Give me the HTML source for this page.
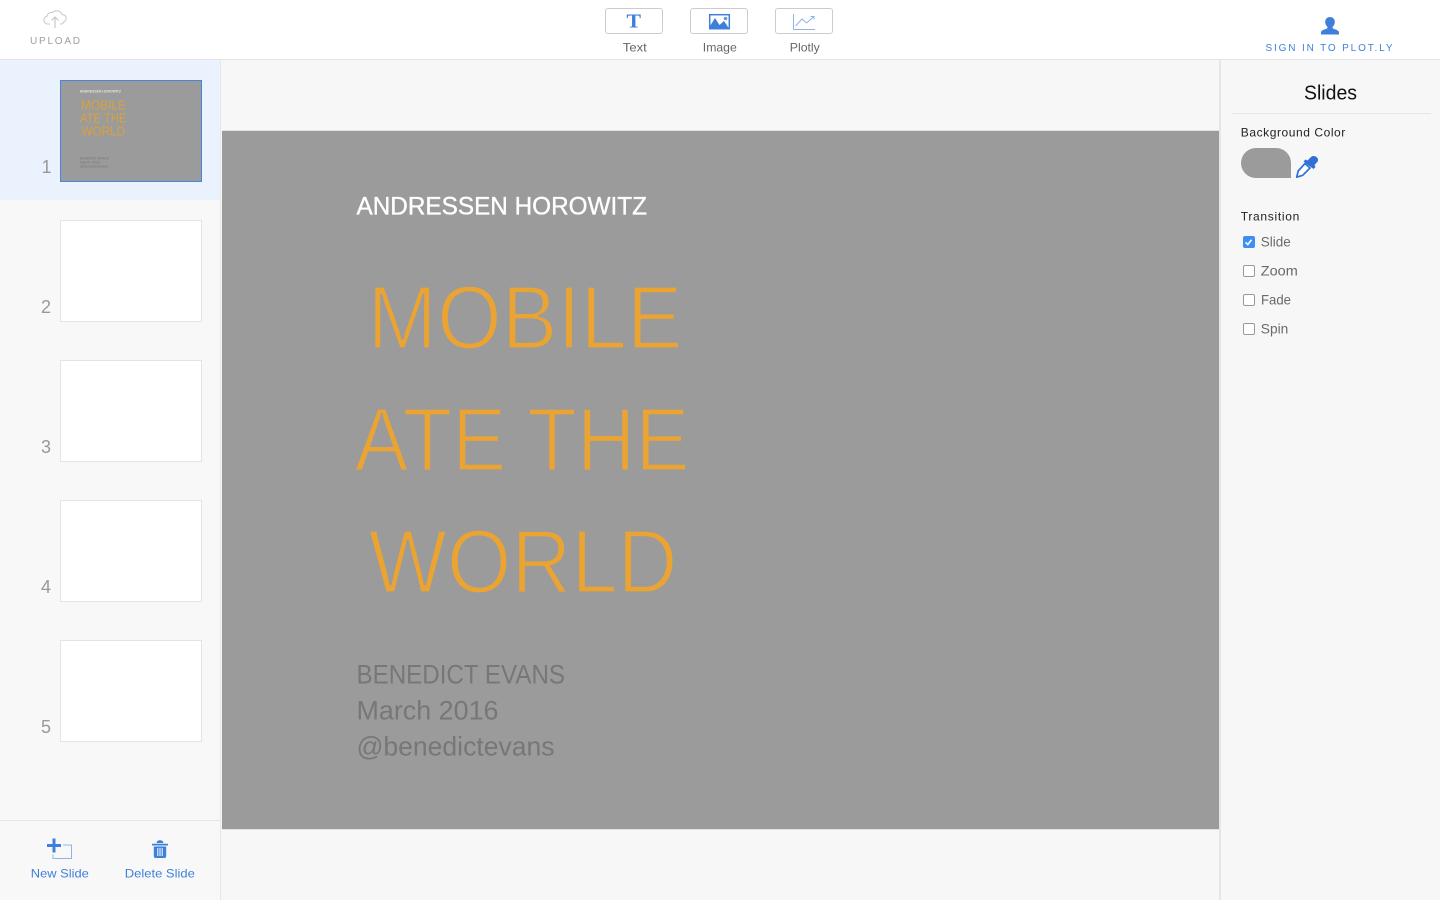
<!DOCTYPE html>
<html lang="en">
<head>
<meta charset="utf-8">
<title>Slides</title>
<style>
html,body{margin:0;padding:0;width:1440px;height:900px;overflow:hidden;background:#f7f7f7}
body{position:relative;font-family:"Liberation Sans",sans-serif}
div{position:absolute;box-sizing:border-box}
svg{position:absolute;left:0;top:0}
text{font-family:"Liberation Sans",sans-serif}
</style>
</head>
<body>
<div style="left:0;top:0;width:1440px;height:60px;background:#fff;border-bottom:1px solid #e5e5e5"></div>
<div style="left:0;top:60px;width:221px;height:840px;background:#f8f8f8;border-right:1px solid #e6e6e6"></div>
<div style="left:0;top:60px;width:220px;height:140px;background:#e9f2fd"></div>
<div style="left:0;top:820px;width:220px;height:1px;background:#e6e6e6"></div>
<div style="left:222px;top:130px;width:997px;height:700px;background:#9b9b9b;border-top:1px solid #e2e2e2;border-bottom:1px solid #e2e2e2"></div>
<div style="left:1219px;top:60px;width:221px;height:840px;background:#f7f7f7;border-left:2px solid #e6e6e6"></div>
<div style="left:1232px;top:113px;width:199px;height:1px;background:#e6e6e6"></div>

<div style="left:605px;top:8px;width:58px;height:26px;background:#fff;border:1px solid #ccc;border-radius:3px"></div>
<div style="left:690px;top:8px;width:58px;height:26px;background:#fff;border:1px solid #ccc;border-radius:3px"></div>
<div style="left:775px;top:8px;width:58px;height:26px;background:#fff;border:1px solid #ccc;border-radius:3px"></div>

<div style="left:60px;top:80px;width:142px;height:102px;background:#9b9b9b;border:1px solid #4a84dc"></div>
<div style="left:60px;top:220px;width:142px;height:102px;background:#fff;border:1px solid #e4e4e4"></div>
<div style="left:60px;top:360px;width:142px;height:102px;background:#fff;border:1px solid #e4e4e4"></div>
<div style="left:60px;top:500px;width:142px;height:102px;background:#fff;border:1px solid #e4e4e4"></div>
<div style="left:60px;top:640px;width:142px;height:102px;background:#fff;border:1px solid #e4e4e4"></div>

<div style="left:1241px;top:148px;width:50px;height:30px;background:#9b9b9b;border-radius:15px 15px 0 15px"></div>

<div style="left:1243px;top:236px;width:12px;height:12px;background:#3f8ff2;border-radius:2px"></div>
<div style="left:1243px;top:265px;width:12px;height:12px;background:#fff;border:1px solid #999;border-radius:2px"></div>
<div style="left:1243px;top:294px;width:12px;height:12px;background:#fff;border:1px solid #999;border-radius:2px"></div>
<div style="left:1243px;top:323px;width:12px;height:12px;background:#fff;border:1px solid #999;border-radius:2px"></div>

<svg width="1440" height="900" viewBox="0 0 1440 900" xmlns="http://www.w3.org/2000/svg">
  <!-- upload -->
  <path d="M50 24h-2.500a3.900 3.900 0 0 1-.6-7.700 4.600 4.600 0 0 1 5.600-3.800 5.700 5.700 0 0 1 9.600 2.300 3.600 3.600 0 0 1 1.900 6.900 4 4 0 0 1-2.500 2.300H60" fill="none" stroke="#c4c8cc" stroke-width="1"/>
  <path d="M55 28V17M51.500 20.500L55 17l3.500 3.500" fill="none" stroke="#c4c8cc" stroke-width="1.200"/>
  <text x="30" y="44" font-size="10" fill="#9aa0a6" textLength="50" lengthAdjust="spacing">UPLOAD</text>

  <!-- toolbar icons -->
  <text x="626.500" y="27.500" font-size="20" font-weight="700" fill="#3f7fdc" style="font-family:'Liberation Serif',serif" textLength="14.500" lengthAdjust="spacingAndGlyphs">T</text>
  <rect x="709.700" y="14.700" width="19.600" height="14" fill="#fff" stroke="#3f7fdc" stroke-width="1.500"/>
  <path d="M710 28.500v-2.500l5-8 4.500 7 4.500-4 5 7.500z" fill="#3f7fdc"/>
  <circle cx="725.500" cy="18.500" r="1.800" fill="#3f7fdc" opacity=".8"/>
  <path d="M793.500 14v15.500H815" fill="none" stroke="#8fb3e8" stroke-width="1"/>
  <path d="M795.500 26l6.500-7 4.500 4 7.500-6.500M810.500 16.500h3.500v3" fill="none" stroke="#8fb3e8" stroke-width="1"/>
  <text x="622.800" y="51.500" font-size="12" fill="#666" textLength="24" lengthAdjust="spacingAndGlyphs">Text</text>
  <text x="702.800" y="51.500" font-size="12" fill="#666" textLength="34" lengthAdjust="spacingAndGlyphs">Image</text>
  <text x="789.800" y="51.500" font-size="12" fill="#666" textLength="30" lengthAdjust="spacingAndGlyphs">Plotly</text>

  <!-- user -->
  <path d="M1330 17c-3 0-4.800 2.200-4.800 5 0 2 .9 3.800 2.200 4.800v1.500c-.6.800-6.400 1.500-6.400 4.200v2h18v-2c0-2.700-5.800-3.400-6.400-4.200v-1.500c1.300-1 2.200-2.800 2.200-4.800 0-2.800-1.800-5-4.800-5z" fill="#3f7fdc"/>
  <text x="1265.500" y="51" font-size="10" fill="#3f7fdc" textLength="127" lengthAdjust="spacing">SIGN IN TO PLOT.LY</text>

  <!-- right panel -->
  <text x="1304" y="99.500" font-size="20" fill="#111" textLength="53" lengthAdjust="spacingAndGlyphs">Slides</text>
  <text x="1240.800" y="136.500" font-size="12" fill="#222" textLength="104.500" lengthAdjust="spacing">Background Color</text>
  <text x="1240.800" y="220.500" font-size="12" fill="#222" textLength="58.500" lengthAdjust="spacing">Transition</text>
  <path d="M1305 163.500l-6.800 7.500-1.500 6.200 6-1.900 7.300-7.300z" fill="#fff" stroke="#2f6fd6" stroke-width="1.700" stroke-linejoin="round"/>
  <path d="M1303.500 161.500l2-2 2 1 3-3c2.500-3.500 8.500-.5 7.500 3.300-.3 1-.8 1.400-3.500 4.200l1 2-2 2z" fill="#2f6fd6"/>
  <path d="M1245.500 242.300l2.300 2.300 3.700-4.800" fill="none" stroke="#fff" stroke-width="1.600"/>
  <text x="1260.800" y="246.500" font-size="14" fill="#6a6a6a" textLength="30" lengthAdjust="spacingAndGlyphs">Slide</text>
  <text x="1260.800" y="275.500" font-size="14" fill="#6a6a6a" textLength="37" lengthAdjust="spacingAndGlyphs">Zoom</text>
  <text x="1261" y="304.500" font-size="14" fill="#6a6a6a" textLength="30" lengthAdjust="spacingAndGlyphs">Fade</text>
  <text x="1260.800" y="333.500" font-size="14" fill="#6a6a6a" textLength="27.500" lengthAdjust="spacingAndGlyphs">Spin</text>

  <!-- slide numbers -->
  <text x="41.500" y="173" font-size="18" fill="#999">1</text>
  <text x="41" y="313" font-size="18" fill="#999">2</text>
  <text x="41" y="453" font-size="18" fill="#999">3</text>
  <text x="41" y="593" font-size="18" fill="#999">4</text>
  <text x="41" y="733" font-size="18" fill="#999">5</text>

  <!-- bottom actions -->
  <path d="M63 845h8.500v13.500H53v-4" fill="none" stroke="#8fb3e8" stroke-width="1"/>
  <path d="M52.500 838.500h3v5.500h5.500v3h-5.500v5.500h-3V847H47v-3h5.500z" fill="#3f7fdc"/>
  <path d="M152 843.800h16v1.700h-16zM156.500 843c.3-3.600 6.700-3.600 7 0z" fill="#3f7fdc"/>
  <path d="M153.800 846.500h12.400v9.500c0 1.200-.8 2-2 2h-8.400c-1.200 0-2-.8-2-2z" fill="#3f7fdc"/>
  <path d="M157.800 848v8M160 848v8M162.200 848v8" stroke="#fff" stroke-width="1"/>
  <text x="30.800" y="877.500" font-size="12" fill="#3f7fdc" textLength="58" lengthAdjust="spacingAndGlyphs">New Slide</text>
  <text x="124.800" y="877.500" font-size="12" fill="#3f7fdc" textLength="70" lengthAdjust="spacingAndGlyphs">Delete Slide</text>

  <!-- main slide -->
  <text x="356.500" y="214.500" font-size="25" fill="#fff" stroke="#fff" stroke-width=".35" textLength="290.500" lengthAdjust="spacingAndGlyphs">ANDRESSEN HOROWITZ</text>
  <g fill="#eba432" stroke="#9b9b9b" stroke-width="2.200" font-size="90">
    <text x="367.500" y="348.500" textLength="315" lengthAdjust="spacingAndGlyphs">MOBILE</text>
    <text x="354.500" y="470.500" textLength="335" lengthAdjust="spacingAndGlyphs">ATE THE</text>
    <text x="368.500" y="592.500" textLength="309" lengthAdjust="spacingAndGlyphs">WORLD</text>
  </g>
  <g fill="#777" font-size="27">
    <text x="356.500" y="683.500" textLength="208.500" lengthAdjust="spacingAndGlyphs">BENEDICT EVANS</text>
    <text x="356.500" y="719.500" textLength="142" lengthAdjust="spacingAndGlyphs">March 2016</text>
    <text x="356.500" y="755.500" textLength="198" lengthAdjust="spacingAndGlyphs">@benedictevans</text>
  </g>

  <!-- thumbnail -->
  <text x="80" y="92.500" font-size="3.600" fill="#fff" textLength="41" lengthAdjust="spacingAndGlyphs">ANDRESSEN HOROWITZ</text>
  <g fill="#e0a235" font-size="13" opacity=".9">
    <text x="81" y="109.700" textLength="45" lengthAdjust="spacingAndGlyphs">MOBILE</text>
    <text x="80" y="122.700" textLength="46.500" lengthAdjust="spacingAndGlyphs">ATE THE</text>
    <text x="81.500" y="135.500" textLength="43.500" lengthAdjust="spacingAndGlyphs">WORLD</text>
  </g>
  <g fill="#777" font-size="3.800">
    <text x="80" y="159.500" textLength="29" lengthAdjust="spacingAndGlyphs">BENEDICT EVANS</text>
    <text x="80" y="163.500" textLength="20" lengthAdjust="spacingAndGlyphs">March 2016</text>
    <text x="80" y="167.500" textLength="28" lengthAdjust="spacingAndGlyphs">@benedictevans</text>
  </g>
</svg>
</body>
</html>
